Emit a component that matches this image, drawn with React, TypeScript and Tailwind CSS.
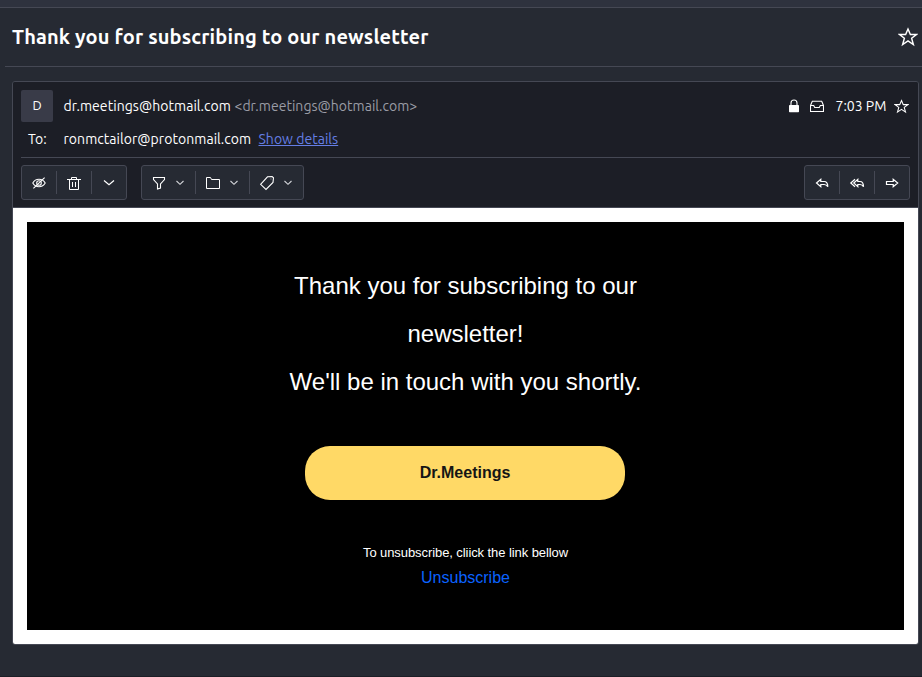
import type { ReactNode } from "react";

function Icon({ w = 16, h = 16, stroke = 1.1, children }: { w?: number; h?: number; stroke?: number; children: ReactNode }) {
  return (
    <svg width={w} height={h} viewBox={`0 0 ${w} ${h}`} fill="none" stroke="#fff" strokeWidth={stroke} className="block shrink-0">
      {children}
    </svg>
  );
}

const STAR = "M8 1.6L9.9 6h4.9l-3.9 3 1.4 5L8 11.1 3.7 14l1.4-5L1.2 6h4.9z";

function Star({ size, stroke }: { size: number; stroke: number }) {
  return (
    <svg width={size} height={size} viewBox="0 0 16 16" fill="none" stroke="#fff" strokeWidth={stroke} className="block shrink-0">
      <path d={STAR} />
    </svg>
  );
}

function EyeOff() {
  return (
    <Icon>
      <path d="M1.8 8c2.7-5 9.7-5 12.4 0-2.7 5-9.7 5-12.4 0z" />
      <circle cx="8" cy="8" r="2.3" />
      <path d="M13.6 2.6L2.4 13.4" />
    </Icon>
  );
}

function Trash() {
  return (
    <Icon stroke={1}>
      <path d="M1 4.5h14M5.5 4.5v-2h5v2M3.5 4.5v10h9v-10M6.5 7v5M9.5 7v5" />
    </Icon>
  );
}

function Chevron({ small = false }: { small?: boolean }) {
  return small ? (
    <Icon w={8} h={6}>
      <path d="M.5 1L4 4.3 7.5 1" stroke="#d4d5da" />
    </Icon>
  ) : (
    <Icon w={12} h={8} stroke={1.2}>
      <path d="M1 1.5l5 4.3 5-4.3" />
    </Icon>
  );
}

function Filter() {
  return (
    <Icon>
      <path d="M2.5 2.5h11v2L9.5 9v4l-3 1V9l-4-4.5z" />
    </Icon>
  );
}

function Folder() {
  return (
    <Icon stroke={1}>
      <path d="M1.5 13.5v-11h4l1 2h8v9z" />
    </Icon>
  );
}

function Tag() {
  return (
    <Icon>
      <path d="M1.6 9.3L8.5 1.8l4.6-.3 1.4 1.3-.5 4.6-7 7.1z" />
      <circle cx="12" cy="4" r=".2" strokeWidth=".5" />
    </Icon>
  );
}

function Reply() {
  return (
    <Icon stroke={1.2}>
      <path d="M2.5 8l4.3-3.7v2.2h3.3c2.4 0 3.7 1.8 3.7 5.3-.8-1.6-1.7-2.3-3.7-2.3H6.8v2.2z" />
    </Icon>
  );
}

function ReplyAll() {
  return (
    <Icon stroke={1.2}>
      <path d="M4.8 8l4-3.7v2.2H11c2.3 0 3.5 1.8 3.5 5.3-.7-1.6-1.6-2.3-3.5-2.3H8.8v2.2z" />
      <path d="M6 4.3L1.8 8 6 11.7" />
    </Icon>
  );
}

function Forward() {
  return (
    <Icon stroke={1.2}>
      <path d="M2.5 6.5h6.7V4.2L13.7 8l-4.5 3.8V9.5H2.5z" />
    </Icon>
  );
}

function Lock() {
  return (
    <svg width="10" height="14" viewBox="0 0 10 14" className="block">
      <path d="M2 7V4a3 3 0 0 1 6 0v3" fill="none" stroke="#fff" strokeWidth="1.1" />
      <rect y="6" width="10" height="7.3" rx=".7" fill="#fff" />
    </svg>
  );
}

function Inbox() {
  return (
    <Icon w={14} h={12}>
      <path d="M.5 5.5L2.3 1.2h9.4l1.8 4.3v6H.5zM.5 5.5h3.2l1 2h4.6l1-2h3.2" />
    </Icon>
  );
}

function Group({ items, wide = false }: { items: ReactNode[]; wide?: boolean }) {
  return (
    <div className="flex h-[35px] items-center rounded-[3px] border border-[#454854] bg-[#262a33]">
      {items.map((item, i) => (
        <div key={i} className="flex items-center">
          {i > 0 && <div className="h-[23px] w-px bg-[#454854]" />}
          <button className={wide ? "flex h-[33px] w-[53px] items-center gap-[9px] pl-[9px]" : "flex h-[33px] w-[34px] items-center justify-center"}>
            {item}
            {wide && <Chevron small />}
          </button>
        </div>
      ))}
    </div>
  );
}

export default function App() {
  return (
    <div className="flex h-[677px] w-[922px] flex-col overflow-hidden bg-[#262a33] font-['Ubuntu','Noto_Sans',sans-serif] text-[14px] text-white">
      <div className="h-2 shrink-0 border-b border-[#454854] bg-[#2e323e]" />
      <header className="ml-[5px] flex h-[59px] shrink-0 items-center justify-between border-b border-[#454854] pr-1 pl-[7px]">
        <h1 className="text-[20px] leading-6 font-bold tracking-[0.14px] whitespace-nowrap">Thank you for subscribing to our newsletter</h1>
        <Star size={20} stroke={1.15} />
      </header>

      <main className="mt-[14px] ml-3 flex h-[564px] w-[907px] shrink-0 flex-col overflow-hidden rounded-[3px] border border-[#454854]">
        <section className="flex h-[126px] shrink-0 flex-col border-b border-[#454854] bg-[#1c1e26] px-2 pt-2">
          <div className="flex h-8 items-center">
            <div className="flex size-8 items-center justify-center rounded-[2px] bg-[#393b48] text-[13px]">D</div>
            <div className="ml-[10.5px] flex gap-[3.5px] whitespace-nowrap">
              <span className="tracking-[0.05px]">dr.meetings@hotmail.com</span>
              <span className="tracking-[0.03px] text-[#9a9ca5]">&lt;dr.meetings@hotmail.com&gt;</span>
            </div>
            <div className="ml-auto flex items-center">
              <Lock />
              <div className="ml-[11px]"><Inbox /></div>
              <span className="ml-[11.5px] w-[51.5px] whitespace-nowrap">7:03 PM</span>
              <div className="ml-[7px]"><Star size={15} stroke={1.1} /></div>
              <div className="w-px" />
            </div>
          </div>
          <div className="flex h-[35px] items-center pl-[7px] whitespace-nowrap">
            <span className="w-[35.5px]">To:</span>
            <span className="w-[188px] tracking-[0.05px]">ronmctailor@protonmail.com</span>
            <a className="ml-[7px] tracking-[0.03px] text-[#657ee4] underline">Show details</a>
          </div>
          <div className="flex border-t border-[#454854] pt-[7px]">
            <Group items={[<EyeOff />, <Trash />, <Chevron />]} />
            <div className="ml-[14px]">
              <Group wide items={[<Filter />, <Folder />, <Tag />]} />
            </div>
            <div className="ml-auto">
              <Group items={[<Reply />, <ReplyAll />, <Forward />]} />
            </div>
          </div>
        </section>

        <section className="flex-1 bg-white px-[14px] pt-[14px] font-['Liberation_Sans',Arial,sans-serif]">
          <div className="flex h-[408px] w-[877px] flex-col items-center bg-black pt-10 text-center">
            <p className="w-[380px] text-[24px] leading-[48px]">
              Thank you for subscribing to our
              <br />
              newsletter!
              <br />
              We'll be in touch with you shortly.
            </p>
            <button className="mt-10 mr-px h-[54px] w-[320px] rounded-[25px] bg-[#ffd966] text-[16px] font-bold text-[#151515]">Dr.Meetings</button>
            <p className="mt-[43px] text-[13px] leading-5 tracking-[-0.08px]">To unsubscribe, cliick the link bellow</p>
            <a className="mt-[3px] text-[16px] leading-6 text-[#0b63ff]">Unsubscribe</a>
          </div>
        </section>
      </main>
      <div className="mt-auto h-px bg-[#1c1e26]" />
    </div>
  );
}
